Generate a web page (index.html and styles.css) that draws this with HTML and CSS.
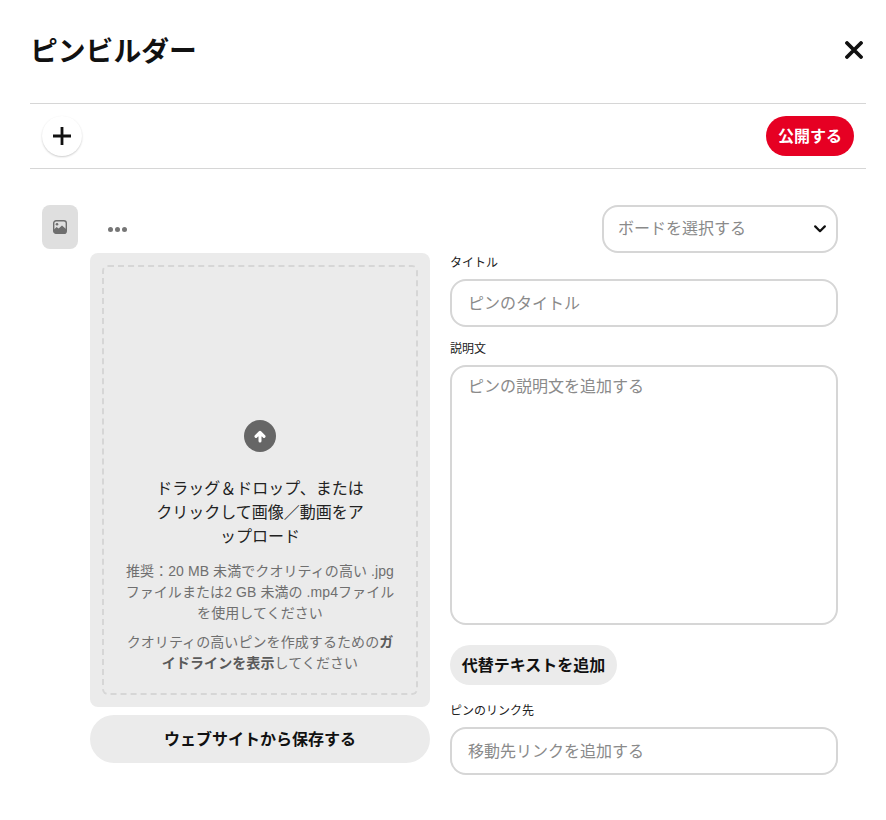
FILE: index.html
```html
<!DOCTYPE html>
<html lang="ja">
<head>
<meta charset="utf-8">
<title>ピンビルダー</title>
<link rel="stylesheet" href="styles.css">
</head>
<body>
<div class="page">
  <header class="header">
    <h1 class="title">ピンビルダー</h1>
    <svg class="close" width="18" height="18" viewBox="0 0 18 18"><path d="M2 2 16 16M16 2 2 16" stroke="#111" stroke-width="3.8" stroke-linecap="round" fill="none"/></svg>
  </header>
  <div class="toolbar">
    <button class="add"><svg width="20" height="20" viewBox="0 0 20 20"><path d="M10 1V19M1 10H19" stroke="#111" stroke-width="2.8" fill="none"/></svg></button>
    <button class="publish">公開する</button>
  </div>
  <div class="body">
    <div class="thumb">
      <svg width="14" height="14" viewBox="0 0 14 14"><rect x="0.7" y="0.7" width="12.6" height="12.6" rx="2.4" fill="none" stroke="#6e6e6e" stroke-width="1.4"/><circle cx="4" cy="4.2" r="1.3" fill="#6e6e6e"/><path d="M1 9.4 3.6 7 5.6 8.6 9 5.4 13 9V11.5A1.8 1.8 0 0 1 11.2 13.4H2.8A1.8 1.8 0 0 1 1 11.5Z" fill="#6e6e6e"/></svg>
    </div>
    <div class="main">
      <div class="top">
        <div class="dots"><i></i><i></i><i></i></div>
        <div class="field select">
          <span class="ph">ボードを選択する</span>
          <svg width="12" height="8" viewBox="0 0 12 8"><path d="M1.2 1.4 6 6.2 10.8 1.4" stroke="#111" stroke-width="2.2" fill="none" stroke-linecap="round" stroke-linejoin="round"/></svg>
        </div>
      </div>
      <div class="cols">
        <div class="left">
          <div class="drop">
            <div class="dash">
              <div class="upload"><svg width="14" height="14" viewBox="0 0 14 14"><path d="M7 12V4M3 7.4 7 3.4 11 7.4" stroke="#fff" stroke-width="3" fill="none" stroke-linecap="round" stroke-linejoin="round"/></svg></div>
              <p class="lead">ドラッグ＆ドロップ、または<br>クリックして画像／動画をア<br>ップロード</p>
              <p class="note">推奨：20 MB 未満でクオリティの高い .jpg<br>ファイルまたは2 GB 未満の .mp4ファイル<br>を使用してください</p>
              <p class="note guide">クオリティの高いピンを作成するための<b>ガ<br>イドラインを表示</b>してください</p>
            </div>
          </div>
          <button class="save">ウェブサイトから保存する</button>
        </div>
        <div class="right">
          <label class="label first">タイトル</label>
          <div class="field input"><span class="ph">ピンのタイトル</span></div>
          <label class="label desc">説明文</label>
          <div class="field area"><span class="ph">ピンの説明文を追加する</span></div>
          <button class="alt">代替テキストを追加</button>
          <label class="label link">ピンのリンク先</label>
          <div class="field input"><span class="ph">移動先リンクを追加する</span></div>
        </div>
      </div>
    </div>
  </div>
</div>
</body>
</html>
```
FILE: styles.css
```css
* { box-sizing: border-box; }
html, body { margin: 0; background: #fff; }
body { font-family: "Liberation Sans", "Noto Sans CJK JP", sans-serif; color: #111; }
.page { width: 886px; height: 820px; padding: 0 20px 0 30px; overflow: hidden; }
.header { height: 103px; display: flex; justify-content: space-between; align-items: flex-start; padding: 32px 3px 0 0; }
.title { margin: 0; font-size: 27.8px; line-height: 40px; font-weight: 700; }
.close { margin-top: 9px; }
.toolbar { height: 66px; border-top: 1px solid #d6d6d6; border-bottom: 1px solid #d6d6d6; display: flex; justify-content: space-between; align-items: center; padding: 0 12px; }
button { font-family: inherit; border: 0; padding: 0 0 2px; color: #111; }
.add { width: 40px; height: 40px; border-radius: 50%; background: #fff; display: flex; align-items: center; justify-content: center; padding: 0; box-shadow: 0 1px 2px rgba(0,0,0,.2); }
.publish { width: 88px; height: 40px; border-radius: 20px; background: #e60023; color: #fff; font-size: 16px; font-weight: 700; }
.body { display: flex; padding: 36px 0 0 12px; }
.thumb { width: 36px; height: 44px; border-radius: 8px; background: #dfdfdf; display: flex; align-items: center; justify-content: center; flex: none; margin-right: 12px; }
.main { width: 748px; }
.top { height: 48px; display: flex; justify-content: space-between; align-items: center; }
.dots { display: flex; gap: 2px; margin: 0 0 0 18px; }
.dots i { width: 5px; height: 5px; border-radius: 50%; background: #767676; }
.field { border: 2px solid #d6d6d6; border-radius: 16px; background: #fff; }
.ph { font-size: 16px; line-height: 24px; color: #8a8a8a; }
.select { width: 236px; height: 48px; display: flex; justify-content: space-between; align-items: center; padding: 0 10px 0 14px; }
.cols { display: flex; gap: 20px; }
.left { width: 340px; flex: none; }
.drop { height: 454px; background: #ebebeb; border-radius: 8px; padding: 12px; }
.dash { height: 430px; border: 2px dashed #d6d6d6; border-radius: 6px; display: flex; flex-direction: column; align-items: center; text-align: center; padding-top: 153px; }
.upload { width: 32px; height: 32px; border-radius: 50%; background: #666; display: flex; align-items: center; justify-content: center; }
.lead { margin: 25px 0 0; font-size: 16px; line-height: 24px; color: #222; white-space: nowrap; }
.note { margin: 12px 0 0; font-size: 14px; line-height: 21px; color: #6f6f6f; white-space: nowrap; letter-spacing: 0.08px; }
.guide { margin-top: 8px; }
.guide b { color: #5a5a5a; }
.save { display: block; width: 340px; height: 48px; margin-top: 8px; border-radius: 24px; background: #ebebeb; font-size: 16px; font-weight: 700; }
.right { width: 388px; flex: none; }
.label { display: block; font-size: 12px; line-height: 18px; color: #222; }
.first { padding-top: 1px; margin-bottom: 7px; }
.desc { margin: 13px 0 7px; }
.link { margin: 17px 0 7px; }
.input { height: 48px; display: flex; align-items: center; padding: 2px 0 0 16px; }
.area { height: 260px; padding: 8px 16px; }
.alt { display: block; width: 167px; height: 40px; margin-top: 20px; border-radius: 20px; background: #ebebeb; font-size: 16px; font-weight: 700; }
```
